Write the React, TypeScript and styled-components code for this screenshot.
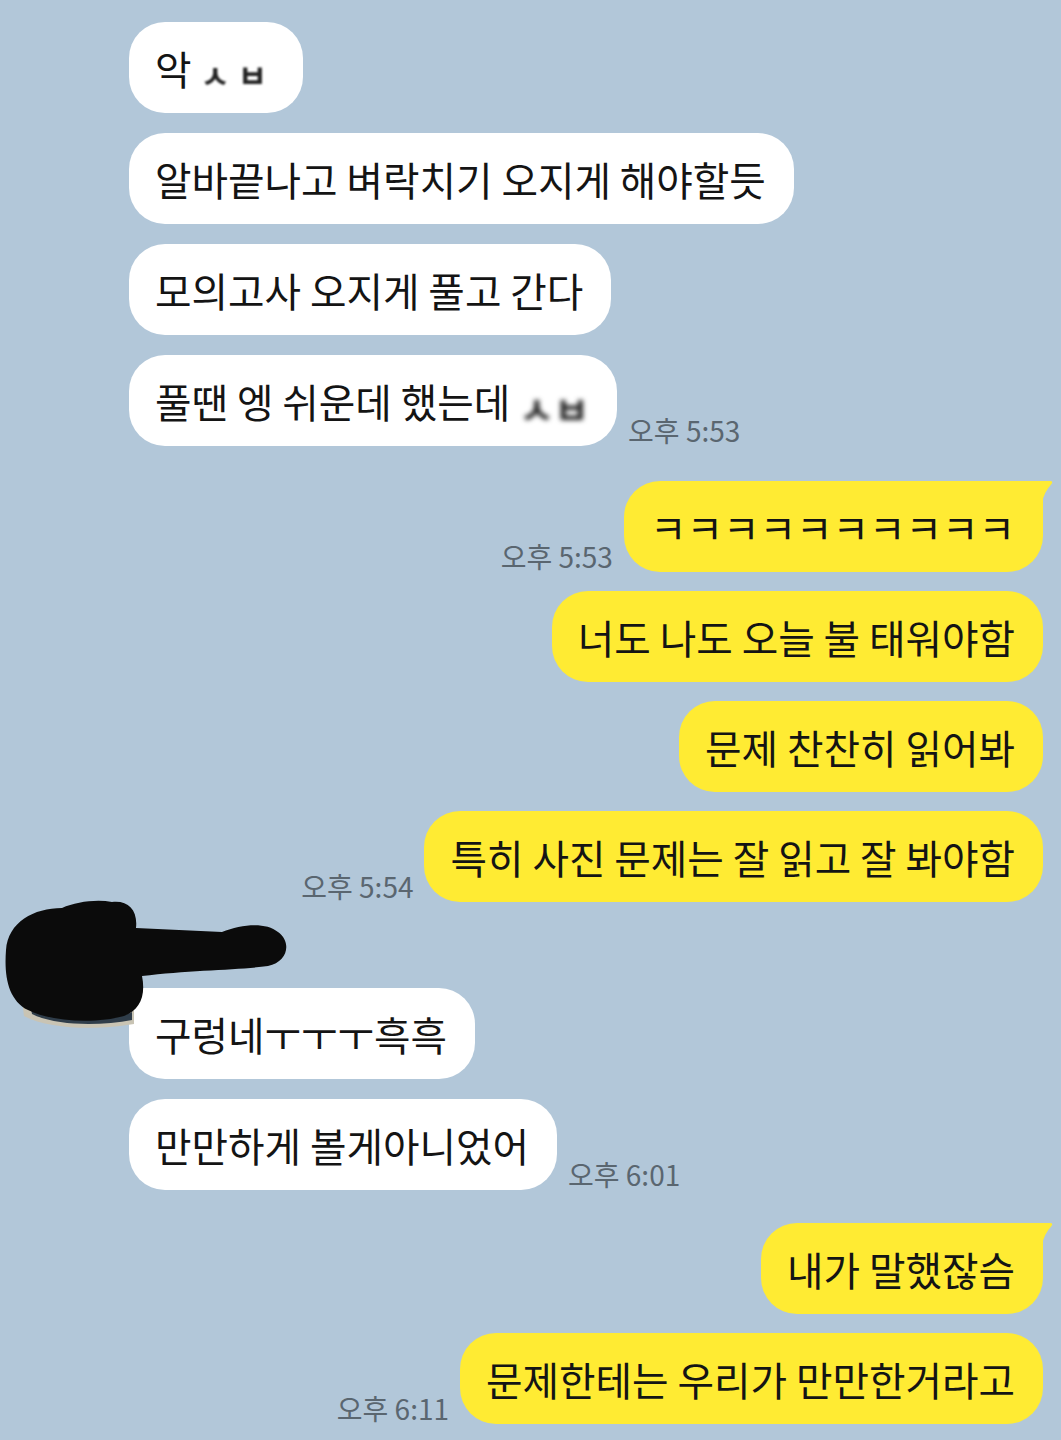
import React from "react";
import styled, { createGlobalStyle } from "styled-components";

type Side = "left" | "right";

interface Message {
  text: React.ReactNode;
  time?: string;
  tail?: boolean;
}

interface GroupData {
  side: Side;
  avatar?: boolean;
  gapTop: number;
  messages: Message[];
}

const GlobalStyle = createGlobalStyle`
  html, body {
    margin: 0;
    padding: 0;
    background: #b2c7d9;
  }
  body {
    font-family: "Noto Sans CJK KR", "Noto Sans", sans-serif;
    -webkit-font-smoothing: antialiased;
  }
`;

const Page = styled.main`
  width: 1061px;
  min-height: 1440px;
  box-sizing: border-box;
  padding: 22px 0 0;
  background: #b2c7d9;
  display: flex;
  flex-direction: column;
  overflow: hidden;
`;

const Group = styled.section<{ $side: Side; $gapTop: number }>`
  position: relative;
  display: flex;
  flex-direction: column;
  margin-top: ${(p) => p.$gapTop}px;
  padding: ${(p) => (p.$side === "left" ? "0 0 0 129px" : "0 18px 0 0")};
`;

const Stack = styled.div<{ $side: Side; $avatar: boolean }>`
  display: flex;
  flex-direction: column;
  gap: ${(p) => (p.$side === "left" ? 20 : 19)}px;
  padding-top: ${(p) => (p.$avatar ? 88 : 0)}px;
`;

const Row = styled.div<{ $side: Side }>`
  display: flex;
  flex-direction: ${(p) => (p.$side === "left" ? "row" : "row-reverse")};
  justify-content: flex-start;
  align-items: flex-end;
  gap: 11px;
`;

const Bubble = styled.div<{ $side: Side; $tail: boolean }>`
  position: relative;
  box-sizing: border-box;
  height: 91px;
  padding: 22px 28px 22px 26px;
  border-radius: 36px;
  ${(p) =>
    p.$tail &&
    (p.$side === "left"
      ? "border-top-left-radius: 2px;"
      : "border-top-right-radius: 2px;")}
  background: ${(p) => (p.$side === "left" ? "#ffffff" : "#ffeb33")};
  color: #141414;
  font-size: 39.7px;
  line-height: 47px;
  white-space: nowrap;
`;

const TailSvg = styled.svg<{ $side: Side }>`
  position: absolute;
  top: 0;
  ${(p) => (p.$side === "left" ? "left: -10px;" : "right: -10px;")}
  fill: ${(p) => (p.$side === "left" ? "#ffffff" : "#ffeb33")};
`;

const Time = styled.span`
  font-size: 28px;
  line-height: 30px;
  color: #5a6670;
  white-space: nowrap;
  margin-bottom: 1px;
`;

const Censored = styled.span<{ $size: number; $blur: number; $spread: number }>`
  display: inline-block;
  font-size: ${(p) => p.$size}px;
  font-weight: 700;
  letter-spacing: ${(p) => p.$spread}px;
  color: #222;
  filter: blur(${(p) => p.$blur}px);
  vertical-align: middle;
`;

const ScribbleSvg = styled.svg`
  position: absolute;
  left: 0;
  top: 0;
  z-index: 1;
`;

const groups: GroupData[] = [
  {
    side: "left",
    gapTop: 0,
    messages: [
      {
        text: (
          <>
            악 <Censored $size={32} $blur={1.3} $spread={8}>ㅅㅂ</Censored>
          </>
        ),
      },
      { text: "알바끝나고 벼락치기 오지게 해야할듯" },
      { text: "모의고사 오지게 풀고 간다" },
      {
        text: (
          <>
            풀땐 엥 쉬운데 했는데 <Censored $size={38} $blur={2.6} $spread={0}>ㅅㅂ</Censored>
          </>
        ),
        time: "오후 5:53",
      },
    ],
  },
  {
    side: "right",
    gapTop: 35,
    messages: [
      { text: "ㅋㅋㅋㅋㅋㅋㅋㅋㅋㅋ", time: "오후 5:53", tail: true },
      { text: "너도 나도 오늘 불 태워야함" },
      { text: "문제 찬찬히 읽어봐" },
      { text: "특히 사진 문제는 잘 읽고 잘 봐야함", time: "오후 5:54" },
    ],
  },
  {
    side: "left",
    avatar: true,
    gapTop: -2,
    messages: [
      { text: "구렁네ㅜㅜㅜ흑흑", tail: true },
      { text: "만만하게 볼게아니었어", time: "오후 6:01" },
    ],
  },
  {
    side: "right",
    gapTop: 33,
    messages: [
      { text: "내가 말했잖슴", tail: true },
      { text: "문제한테는 우리가 만만한거라고", time: "오후 6:11" },
    ],
  },
];

const Tail: React.FC<{ side: Side }> = ({ side }) => (
  <TailSvg $side={side} viewBox="0 0 12 22" width={12} height={22}>
    {side === "right" ? (
      <path d="M0 0 H9 Q12.5 0 10.5 3 Q3 11 1 22 H0 Z" />
    ) : (
      <path d="M12 0 H3 Q-0.5 0 1.5 3 Q9 11 11 22 H12 Z" />
    )}
  </TailSvg>
);

// black marker scribble hiding the profile picture and name
const Scribble = () => (
  <ScribbleSvg viewBox="0 0 290 132" width={290} height={132}>
    <path d="M22 100 C50 124 110 128 134 110 L134 124 C100 130 50 130 24 116 Z" fill="#c9c4b4" />
    <path d="M30 104 C56 122 108 124 132 112 L132 120 C100 126 56 126 32 114 Z" fill="#2f3d4a" />
    <path
      d="M6 50 C8 22 34 8 62 8 C76 2 96 -1 112 2 C128 0 138 10 136 28
         L222 32 C242 24 266 22 278 32 C292 42 288 62 268 66
         C240 70 190 70 142 76 C146 96 140 110 124 116
         C96 124 52 122 28 110 C8 100 4 76 6 50 Z"
      fill="#0b0b0b"
    />
  </ScribbleSvg>
);

export default function App() {
  return (
    <>
      <GlobalStyle />
      <Page>
        {groups.map((group, gi) => (
          <Group key={gi} $side={group.side} $gapTop={group.gapTop}>
            {group.avatar && <Scribble />}
            <Stack $side={group.side} $avatar={!!group.avatar}>
              {group.messages.map((msg, mi) => (
                <Row key={mi} $side={group.side}>
                  <Bubble $side={group.side} $tail={!!msg.tail}>
                    {msg.tail && <Tail side={group.side} />}
                    {msg.text}
                  </Bubble>
                  {msg.time && <Time>{msg.time}</Time>}
                </Row>
              ))}
            </Stack>
          </Group>
        ))}
      </Page>
    </>
  );
}
